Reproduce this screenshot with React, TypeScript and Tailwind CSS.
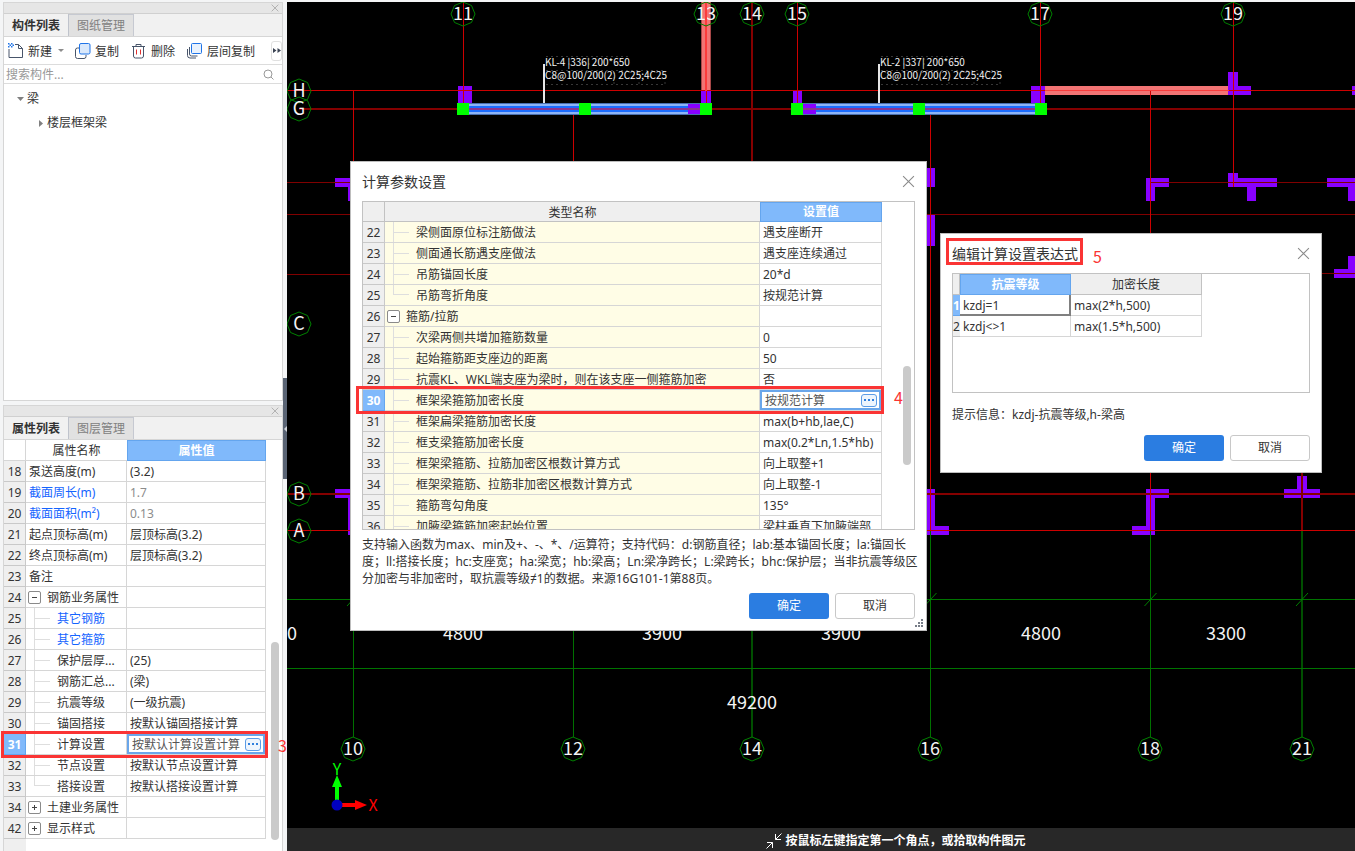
import type { ReactNode } from "react";

type Node = "plain" | "group-open" | "group-closed" | "child" | "last";

interface Row {
  no: number;
  name: string;
  value: string;
  node: Node;
  link?: boolean;
  muted?: boolean;
  selected?: boolean;
}

const propertyRows: Row[] = [
  { no: 18, name: "泵送高度(m)", value: "(3.2)", node: "plain" },
  { no: 19, name: "截面周长(m)", value: "1.7", node: "plain", link: true, muted: true },
  { no: 20, name: "截面面积(m²)", value: "0.13", node: "plain", link: true, muted: true },
  { no: 21, name: "起点顶标高(m)", value: "层顶标高(3.2)", node: "plain" },
  { no: 22, name: "终点顶标高(m)", value: "层顶标高(3.2)", node: "plain" },
  { no: 23, name: "备注", value: "", node: "plain" },
  { no: 24, name: "钢筋业务属性", value: "", node: "group-open" },
  { no: 25, name: "其它钢筋", value: "", node: "child", link: true },
  { no: 26, name: "其它箍筋", value: "", node: "child", link: true },
  { no: 27, name: "保护层厚...", value: "(25)", node: "child" },
  { no: 28, name: "钢筋汇总...", value: "(梁)", node: "child" },
  { no: 29, name: "抗震等级", value: "(一级抗震)", node: "child" },
  { no: 30, name: "锚固搭接", value: "按默认锚固搭接计算", node: "child" },
  { no: 31, name: "计算设置", value: "按默认计算设置计算", node: "child", selected: true },
  { no: 32, name: "节点设置", value: "按默认节点设置计算", node: "child" },
  { no: 33, name: "搭接设置", value: "按默认搭接设置计算", node: "last" },
  { no: 34, name: "土建业务属性", value: "", node: "group-closed" },
  { no: 42, name: "显示样式", value: "", node: "group-closed" },
];

const paramRows: Row[] = [
  { no: 22, name: "梁侧面原位标注筋做法", value: "遇支座断开", node: "child" },
  { no: 23, name: "侧面通长筋遇支座做法", value: "遇支座连续通过", node: "child" },
  { no: 24, name: "吊筋锚固长度", value: "20*d", node: "child" },
  { no: 25, name: "吊筋弯折角度", value: "按规范计算", node: "last" },
  { no: 26, name: "箍筋/拉筋", value: "", node: "group-open" },
  { no: 27, name: "次梁两侧共增加箍筋数量", value: "0", node: "child" },
  { no: 28, name: "起始箍筋距支座边的距离", value: "50", node: "child" },
  { no: 29, name: "抗震KL、WKL端支座为梁时，则在该支座一侧箍筋加密", value: "否", node: "child" },
  { no: 30, name: "框架梁箍筋加密长度", value: "按规范计算", node: "child", selected: true },
  { no: 31, name: "框架扁梁箍筋加密长度", value: "max(b+hb,lae,C)", node: "child" },
  { no: 32, name: "框支梁箍筋加密长度", value: "max(0.2*Ln,1.5*hb)", node: "child" },
  { no: 33, name: "框架梁箍筋、拉筋加密区根数计算方式", value: "向上取整+1", node: "child" },
  { no: 34, name: "框架梁箍筋、拉筋非加密区根数计算方式", value: "向上取整-1", node: "child" },
  { no: 35, name: "箍筋弯勾角度", value: "135°", node: "child" },
  { no: 36, name: "加腋梁箍筋加密起始位置", value: "梁柱垂直下加腋端部", node: "child" },
];

function TreeMark({ node }: { node: Node }) {
  if (node === "plain") return <span className="w-[3px] shrink-0" />;
  if (node === "child")
    return (
      <span className="ml-2 mr-[7px] flex h-full w-4 shrink-0 items-center border-l border-[#dedede]">
        <span className="h-px w-full bg-[#dedede]" />
      </span>
    );
  if (node === "last")
    return <span className="ml-2 mr-[7px] h-1/2 w-4 shrink-0 self-start border-b border-l border-[#dedede]" />;
  return (
    <button
      type="button"
      aria-label={node === "group-open" ? "折叠" : "展开"}
      className="ml-[2px] mr-[6px] flex h-[13px] w-[13px] shrink-0 items-center justify-center rounded-[2px] border border-[#8a8a8a] bg-white"
    >
      <svg viewBox="0 0 7 7" className="h-[7px] w-[7px]" stroke="#444" fill="none">
        <path d="M1 3.5h5" />
        {node === "group-closed" && <path d="M3.5 1v5" />}
      </svg>
    </button>
  );
}

function MoreButton() {
  return (
    <button
      type="button"
      aria-label="更多"
      className="mr-[2px] flex h-[13px] w-4 shrink-0 items-center justify-center rounded-[3px] border border-[#5c9ce6] bg-[#eef5fd]"
    >
      <svg viewBox="0 0 10 2" className="h-[2px] w-[10px]" fill="#2f7fdd">
        <rect width="2" height="2" />
        <rect x="4" width="2" height="2" />
        <rect x="8" width="2" height="2" />
      </svg>
    </button>
  );
}

function GridRows({ rows, nameClass }: { rows: Row[]; nameClass: string }) {
  return (
    <tbody>
      {rows.map((r) => (
        <tr key={r.no} className="h-[21px]">
          <th
            scope="row"
            className={
              r.selected
                ? "border-b border-r border-[#64a5ee] bg-[#80b9fb] p-0 pt-[2px] text-center font-bold text-white"
                : "border-b border-r border-[#c9c9c9] bg-[#efefef] p-0 pt-[2px] text-center font-normal"
            }
          >
            {r.no}
          </th>
          <td className={`border-b border-r border-[#d6d6d6] p-0 ${nameClass}`}>
            <div className={`flex h-5 items-center whitespace-nowrap ${r.link ? "text-[#1464ff]" : ""}`}>
              <TreeMark node={r.node} />
              <span className="pt-[2px]">{r.name}</span>
            </div>
          </td>
          <td className={`border-b border-r border-[#d6d6d6] bg-white p-0 ${r.muted ? "text-[#8c8c8c]" : ""}`}>
            {r.selected ? (
              <div className="flex h-5 items-center border-2 border-[#6aa6ea]">
                <input
                  aria-label={r.name}
                  defaultValue={r.value}
                  className="h-4 w-0 min-w-0 flex-1 bg-transparent pl-[3px] pt-px leading-4 text-[#555] outline-none"
                />
                <MoreButton />
              </div>
            ) : (
              <div className="flex h-5 items-center whitespace-nowrap pl-[3px] pt-[2px]">{r.value}</div>
            )}
          </td>
        </tr>
      ))}
    </tbody>
  );
}

function Cross({ className }: { className: string }) {
  return (
    <svg viewBox="0 0 12 12" className={className} stroke="currentColor" fill="none">
      <path d="M1 1l10 10M11 1L1 11" />
    </svg>
  );
}

function PanelHead({ tabs }: { tabs: [string, string] }) {
  return (
    <>
      <div className="flex h-[11px] shrink-0 items-center justify-end border-b border-[#d0d0d0] bg-[#e6e6e6] pr-[3px]">
        <button type="button" aria-label="关闭面板" className="text-[#999]">
          <Cross className="h-2 w-2" />
        </button>
      </div>
      <div className="flex h-[23px] shrink-0 border-b border-[#d6d6d6] bg-[#f1f1f1]" role="tablist">
        <button
          type="button"
          role="tab"
          aria-selected="true"
          className="w-[65px] border-r border-[#bfc3cc] pt-[2px] font-bold"
        >
          {tabs[0]}
        </button>
        <button
          type="button"
          role="tab"
          aria-selected="false"
          className="w-[65px] border-r border-t border-[#c6c9d1] bg-[#e1e1e1] pt-px text-[#808080]"
        >
          {tabs[1]}
        </button>
      </div>
    </>
  );
}

function ToolButton({ icon, label, className }: { icon: ReactNode; label: string; className: string }) {
  return (
    <button type="button" className={`flex shrink-0 items-center gap-1 whitespace-nowrap ${className}`}>
      {icon}
      <span className="pt-[2px]">{label}</span>
    </button>
  );
}

function Toolbar() {
  return (
    <div className="flex h-7 shrink-0 items-center border-b border-[#dcdcdc] bg-white pl-1">
      <ToolButton
        className=""
        label="新建"
        icon={
          <svg viewBox="0 0 16 16" className="h-4 w-4" fill="none">
            <path d="M1 6v8.5h13.500V5.500L10.500 1.500H7M10.500 1.500v4h4" stroke="#48556a" strokeLinejoin="round" />
            <path
              d="M0 0h1.500v1.500H0zM3 0h1.500v1.500H3zM1.500 1.500H3V3H1.500zM4.500 1.500H6V3H4.500zM0 3h1.500v1.500H0zM3 3h1.500v1.500H3z"
              fill="#1f74e8"
            />
          </svg>
        }
      />
      <svg viewBox="0 0 6 3" className="ml-[6px] h-[3px] w-[6px] shrink-0" fill="#8c8c8c">
        <path d="M0 0h6L3 3z" />
      </svg>
      <ToolButton
        className="ml-[11px]"
        label="复制"
        icon={
          <svg viewBox="0 0 16 16" className="h-4 w-4" fill="none">
            <path d="M4 5H2.500a2 2 0 0 0-2 2v6.500a2 2 0 0 0 2 2H9a2 2 0 0 0 2-2V12" stroke="#48556a" />
            <rect x="4.500" y=".5" width="10.500" height="10.500" rx="1.500" fill="#d9e8fb" stroke="#1f74e8" />
          </svg>
        }
      />
      <ToolButton
        className="ml-3"
        label="删除"
        icon={
          <svg viewBox="0 0 16 16" className="h-4 w-4" fill="none">
            <path d="M1 3.500h13M5 3.500v-2h5v2M2.500 3.500v9.500a2 2 0 0 0 2 2h6a2 2 0 0 0 2-2V3.500" stroke="#48556a" />
            <path d="M5.500 6.500v5M9.500 6.500v5" stroke="#e03030" />
          </svg>
        }
      />
      <ToolButton
        className="ml-3"
        label="层间复制"
        icon={
          <svg viewBox="0 0 16 16" className="h-4 w-4" fill="none">
            <path d="M.5 6v6.500a2.500 2.500 0 0 0 2.500 2.500h6M2.500 4v7a2 2 0 0 0 2 2h6" stroke="#48556a" />
            <rect x="4.500" y=".5" width="10" height="10" rx="1" fill="#e9f2fd" stroke="#1f74e8" />
          </svg>
        }
      />
      <button
        type="button"
        aria-label="更多工具"
        className="ml-auto flex h-5 w-[11px] shrink-0 items-center justify-center rounded-[3px] border border-[#e0e0e0]"
      >
        <svg viewBox="0 0 8 5" className="h-[5px] w-2 shrink-0" fill="#3c4454">
          <path d="M0 0l3.500 2.500L0 5zM4.500 0L8 2.500 4.500 5z" />
        </svg>
      </button>
    </div>
  );
}

function ComponentPanel() {
  return (
    <section className="flex flex-col border border-[#d6d6d6] bg-white">
      <PanelHead tabs={["构件列表", "图纸管理"]} />
      <Toolbar />
      <label className="flex h-[19px] shrink-0 items-center border-b border-[#dcdcdc] pl-[2px] pr-2">
        <input
          aria-label="搜索构件"
          placeholder="搜索构件..."
          className="min-w-0 flex-1 bg-transparent pt-[2px] leading-4 outline-none placeholder:text-[#999]"
        />
        <svg viewBox="0 0 11 11" className="h-[11px] w-[11px]" fill="none" stroke="#999">
          <circle cx="5" cy="5" r="4" />
          <path d="M8 8l2.500 2.500" />
        </svg>
      </label>
      <ul className="h-[316px] pt-[3px] leading-6">
        <li>
          <span className="flex items-center gap-[3px] pl-[13px]">
            <svg viewBox="0 0 7 4" className="h-1 w-[7px]" fill="#808080">
              <path d="M0 0h7L3.500 4z" />
            </svg>
            梁
          </span>
          <ul>
            <li className="flex items-center gap-1 pl-[35px]">
              <svg viewBox="0 0 4 7" className="h-[7px] w-1" fill="#808080">
                <path d="M0 0l4 3.500L0 7z" />
              </svg>
              楼层框架梁
            </li>
          </ul>
        </li>
      </ul>
    </section>
  );
}

function PropertyPanel() {
  return (
    <section className="flex min-h-0 flex-1 flex-col border border-b-0 border-[#d6d6d6] bg-white">
      <PanelHead tabs={["属性列表", "图层管理"]} />
      <div className="relative flex min-h-0 flex-1">
        <div className="flex w-[262px] flex-col">
          <table className="w-full table-fixed border-separate border-spacing-0">
            <colgroup>
              <col className="w-[22px]" />
              <col className="w-[101px]" />
              <col />
            </colgroup>
            <thead>
              <tr className="h-[21px]">
                <th aria-label="序号" className="border-b border-r border-[#d6d6d6] p-0" />
                <th className="border-b border-[#d6d6d6] p-0 pt-px font-normal">属性名称</th>
                <th className="border border-[#64a5ee] bg-[#80b9fb] p-0 font-bold leading-[18px] text-white">属性值</th>
              </tr>
            </thead>
            <GridRows rows={propertyRows} nameClass="bg-white" />
          </table>
          <div className="w-[22px] flex-1 bg-[#efefef]" />
        </div>
        <div className="absolute right-[3px] top-[202px] h-[198px] w-2 rounded-full bg-[#cacaca]" />
      </div>
    </section>
  );
}

const V = "#8800ff";

const columns: number[][] = [
  [458, 86, 14, 28], [701, 91, 10, 14], [793, 91, 9, 14], [1031, 86, 14, 28],
  [1228, 72, 10, 23], [1238, 86, 13, 9], [1352, 86, 10, 9],
  [1146, 178, 9, 23], [1155, 178, 14, 9],
  [1228, 173, 10, 14], [1238, 178, 39, 9], [1247, 187, 9, 14],
  [1327, 178, 30, 9], [1348, 187, 9, 14],
  [926, 168, 9, 19], [926, 215, 9, 31],
  [1334, 269, 23, 9], [1348, 256, 9, 13],
  [926, 489, 9, 46], [935, 526, 14, 9],
  [1146, 489, 9, 46], [1155, 489, 14, 9], [1132, 526, 14, 9],
  [1284, 489, 36, 9], [1297, 476, 10, 13],
  [335, 178, 20, 9], [348, 187, 9, 14], [335, 489, 20, 9], [348, 498, 9, 37],
];

const redLines: number[][] = [
  [287, 90.5, 1400, 90.5], [287, 530.5, 1400, 530.5],
  [463.5, 2, 463.5, 109], [353.5, 90, 353.5, 531], [573.5, 109, 573.5, 531],
  [706.5, 2, 706.5, 109], [797.5, 2, 797.5, 109], [930.5, 109, 930.5, 531],
  [1040.5, 2, 1040.5, 109], [1233.5, 2, 1233.5, 187], [1150.5, 90, 1150.5, 531],
];

const darkLines: number[][] = [
  [287, 182.5, 353, 182.5], [1150, 182.5, 1400, 182.5], [287, 214.5, 1400, 214.5],
  [287, 274.5, 353, 274.5], [1300, 273.5, 1400, 273.5],
];

const thickLines: number[][] = [
  [299, 109, 1400, 109], [287, 494, 1400, 494], [752, 2, 752, 531], [1302, 473, 1302, 531],
];

type Bubble = [string, number, number];

const numberedTop: Bubble[] = [
  ["11", 463, 14], ["13", 706, 14], ["15", 797, 14], ["17", 1040, 14], ["19", 1233, 14],
];

const otherBubbles: Bubble[] = [
  ["14", 752, 14],
  ["H", 299, 91], ["G", 299, 109], ["C", 299, 324], ["B", 299, 494], ["A", 299, 531],
  ["10", 353, 749], ["12", 573, 749], ["14", 752, 749], ["16", 930, 749], ["18", 1150, 749], ["21", 1302, 749],
];

const dims: [string, number, number][] = [
  ["0", 292, 640], ["4800", 463, 640], ["3900", 662, 640], ["3900", 841, 640],
  ["4800", 1041, 640], ["3300", 1226, 640], ["49200", 752, 709],
];

function BubbleTexts({ data }: { data: Bubble[] }) {
  return (
    <g fill="#f4f4f4" fontSize="18" textAnchor="middle">
      {data.map(([t, x, y]) => (
        <text key={`${t}-${x}-${y}`} x={x} y={y + 6}>
          {t}
        </text>
      ))}
    </g>
  );
}

function Lines({ data, stroke, width }: { data: number[][]; stroke: string; width: number }) {
  return (
    <g stroke={stroke} strokeWidth={width}>
      {data.map(([x1, y1, x2, y2], i) => (
        <line key={i} x1={x1} y1={y1} x2={x2} y2={y2} />
      ))}
    </g>
  );
}

function Beam({ x, width, stub }: { x: number; width: number; stub: number }) {
  return (
    <g>
      <rect x={x} y="103" width={width} height="12" fill="#4a6fae" />
      <rect x={x} y="104" width={width} height="10" fill="#8db4f6" />
      <rect x={x} y="106" width={width} height="6" fill="#1a6cff" />
      <rect x={stub} y="104" width="13" height="10" fill={V} />
      <rect x={x} y="108" width={width} height="2" fill="#8a3590" />
    </g>
  );
}

function Tag({ x, head, body }: { x: number; head: string; body: string }) {
  return (
    <g>
      <rect x={x - 1} y="64" width="2" height="39" fill="#e6e6e6" />
      <g stroke="#8a8a8a" strokeDasharray="2 3" opacity="0.4" fill="none">
        <path d={`M${x + 2} 56.500h84M${x + 2} 70.500h118M${x + 2} 84.500h118`} />
        <path d={`M${x + 25} 58v10M${x + 45} 58v10M${x + 70} 72v12M${x + 95} 72v12M${x + 121} 72v12`} />
      </g>
      <g fill="#f2f2f2" fontSize="10">
        <text x={x + 1} y="66">{head}</text>
        <text x={x + 1} y="79">{body}</text>
      </g>
    </g>
  );
}

function Drawing() {
  return (
    <svg className="h-full w-full font-['Noto_Sans_CJK_SC',sans-serif]" role="img" aria-label="结构平面图">
      <g transform="translate(-287 -2)">
        <g shapeRendering="crispEdges">
          <rect x="701" y="2" width="10" height="89" fill="#a84848" />
          <rect x="702" y="2" width="8" height="89" fill="#f27474" />
          <rect x="1045" y="86" width="184" height="9" fill="#f27474" />
          {columns.map(([x, y, w, h], i) => (
            <rect key={i} x={x} y={y} width={w} height={h} fill={V} />
          ))}
        </g>
        <BubbleTexts data={numberedTop} />
        <g shapeRendering="crispEdges">
          <Lines data={thickLines} stroke="#850000" width={2} />
          <Lines data={darkLines} stroke="#800000" width={1} />
          <Lines data={redLines} stroke="#cc0000" width={1} />
          <Lines
            data={[[706, 2, 706, 91]]}
            stroke="#fb3c3c"
            width={2}
          />
          <Lines data={[[1045, 90.5, 1229, 90.5]]} stroke="#fb3c3c" width={1} />
          <Lines
            data={[353.5, 573.5, 930.5, 1150.5].map((x) => [x, 531, x, 737])}
            stroke="#007000"
            width={1}
          />
          <Lines data={[[752, 531, 752, 737], [1302, 531, 1302, 737]]} stroke="#004f00" width={2} />
          <Lines data={[[287, 599.5, 1400, 599.5], [287, 668.5, 1400, 668.5]]} stroke="#007400" width={1} />
        </g>
        <Lines
          data={[353, 930.5, 1150.5, 1302].map((x) => [x - 6, 606, x + 6, 593])}
          stroke="#008000"
          width={1}
        />
        <g fill="none" stroke="#008200">
          {[...numberedTop, ...otherBubbles].map(([t, x, y]) => (
            <polygon
              key={`${t}-${x}-${y}`}
              points={Array.from({ length: 8 }, (_, i) => {
                const a = (i * Math.PI) / 4;
                return `${x + 12 * Math.sin(a)},${y - 12 * Math.cos(a)}`;
              }).join(" ")}
            />
          ))}
        </g>
        <BubbleTexts data={otherBubbles} />
        <Beam x={463} width={243} stub={688} />
        <Beam x={797} width={244} stub={803} />
        {[463, 585, 706, 797, 919, 1041].map((x) => (
          <rect key={x} x={x - 6} y="103" width="12" height="12" fill="#00ff00" />
        ))}
        <Tag x={544} head="KL-4 |336| 200*650" body="C8@100/200(2) 2C25;4C25" />
        <Tag x={879} head="KL-2 |337| 200*650" body="C8@100/200(2) 2C25;4C25" />
        <g fill="#f4f4f4" fontSize="18" textAnchor="middle">
          {dims.map(([t, x, y]) => (
            <text key={`${t}-${x}`} x={x} y={y}>
              {t}
            </text>
          ))}
        </g>
        <rect x="335" y="786" width="4" height="16" fill="#00ff00" />
        <path d="M337 775l5 12h-10z" fill="#00ff00" />
        <rect x="341" y="803" width="15" height="4" fill="#ff0000" />
        <path d="M367 805l-12 -5v10z" fill="#ff0000" />
        <circle cx="337" cy="805" r="5.500" fill="#0000c0" />
        <g fontSize="16" textAnchor="middle">
          <text x="337" y="775" fill="#00ff00">Y</text>
          <text x="373" y="811" fill="#ff0000">X</text>
        </g>
      </g>
    </svg>
  );
}

function DialogButtons() {
  return (
    <div className="flex justify-end gap-[6px]">
      <button type="button" className="h-[26px] w-20 rounded-[3px] bg-[#2b7de1] text-white">
        确定
      </button>
      <button type="button" className="h-[26px] w-20 rounded-[3px] border border-[#c8c8c8] bg-white">
        取消
      </button>
    </div>
  );
}

function DialogTitle({ text }: { text: string }) {
  return (
    <header className="flex h-[39px] shrink-0 items-center justify-between">
      <h2 className="text-sm">{text}</h2>
      <button type="button" aria-label="关闭" className="text-[#8a8a8a]">
        <Cross className="h-[13px] w-[13px]" />
      </button>
    </header>
  );
}

function ParamDialog() {
  return (
    <section
      role="dialog"
      aria-label="计算参数设置"
      className="absolute left-[350px] top-[161px] w-[577px] border border-[#bdbdbd] bg-white px-[11px] pb-[11px]"
    >
      <DialogTitle text="计算参数设置" />
      <div className="relative h-[329px] overflow-hidden border border-[#c2c2c2] pr-8">
        <table className="w-full table-fixed border-separate border-spacing-0">
          <colgroup>
            <col className="w-[22px]" />
            <col />
            <col className="w-[122px]" />
          </colgroup>
          <thead>
            <tr className="h-5">
              <th aria-label="序号" className="border-b border-r border-[#c2c2c2] bg-[#efefef] p-0" />
              <th className="border-b border-[#c2c2c2] bg-[#efefef] p-0 pt-[2px] font-normal">类型名称</th>
              <th className="border border-[#64a5ee] bg-[#80b9fb] p-0 font-bold leading-[18px] text-white">设置值</th>
            </tr>
          </thead>
          <GridRows rows={paramRows} nameClass="bg-[#fffde6]" />
        </table>
        <div className="absolute right-[3px] top-[164px] h-[99px] w-2 rounded-full bg-[#cacaca]" />
      </div>
      <p className="mb-[6px] mt-[6px] whitespace-nowrap leading-[17px]">
        支持输入函数为max、min及+、-、*、/运算符；支持代码：d:钢筋直径；lab:基本锚固长度；la:锚固长
        <br />
        度；ll:搭接长度；hc:支座宽；ha:梁宽；hb:梁高；Ln:梁净跨长；L:梁跨长；bhc:保护层；当非抗震等级区
        <br />
        分加密与非加密时，取抗震等级≠1的数据。来源16G101-1第88页。
      </p>
      <DialogButtons />
      <svg viewBox="0 0 8 8" className="absolute bottom-[3px] right-[3px] h-2 w-2" fill="#777d88">
        <path d="M6 0h2v2H6zM3 3h2v2H3zM6 3h2v2H6zM0 6h2v2H0zM3 6h2v2H3zM6 6h2v2H6z" />
      </svg>
    </section>
  );
}

function ExpressionDialog() {
  const rows: [string, string][] = [
    ["kzdj=1", "max(2*h,500)"],
    ["kzdj<>1", "max(1.5*h,500)"],
  ];
  return (
    <section
      role="dialog"
      aria-label="编辑计算设置表达式"
      className="absolute left-[940px] top-[233px] w-[382px] border border-[#bdbdbd] bg-white px-[11px] pb-[11px]"
    >
      <DialogTitle text="编辑计算设置表达式" />
      <div className="h-[120px] border border-[#c2c2c2]">
        <table className="w-[249px] table-fixed border-separate border-spacing-0">
          <colgroup>
            <col className="w-[7px]" />
            <col className="w-[111px]" />
            <col />
          </colgroup>
          <thead>
            <tr className="h-[21px]">
              <th aria-label="序号" className="border-b border-r border-[#c2c2c2] bg-[#efefef] p-0" />
              <th className="border border-[#64a5ee] bg-[#80b9fb] p-0 font-bold leading-[18px] text-white">抗震等级</th>
              <th className="border-b border-r border-[#c2c2c2] bg-[#efefef] p-0 pt-[2px] font-normal">加密长度</th>
            </tr>
          </thead>
          <tbody>
            {rows.map(([level, length], i) => (
              <tr key={level} className="h-[21px]">
                <th
                  scope="row"
                  className={
                    i === 0
                      ? "overflow-hidden border-b border-[#64a5ee] bg-[#80b9fb] p-0 pt-[2px] text-left font-bold text-white"
                      : "overflow-hidden border-b border-[#c2c2c2] bg-[#efefef] p-0 pt-[2px] text-left font-normal"
                  }
                >
                  {i + 1}
                </th>
                <td
                  className={
                    i === 0
                      ? "border-b-2 border-r-2 border-[#808080] p-0 pl-[3px] pt-[2px]"
                      : "border-b border-r border-[#d6d6d6] p-0 pl-[3px] pt-[2px]"
                  }
                >
                  {level}
                </td>
                <td className="border-b border-r border-[#d6d6d6] p-0 pl-[3px] pt-[2px]">{length}</td>
              </tr>
            ))}
          </tbody>
        </table>
      </div>
      <p className="mb-[11px] mt-[13px] leading-[18px]">提示信息：kzdj-抗震等级,h-梁高</p>
      <DialogButtons />
    </section>
  );
}

function StatusBar() {
  return (
    <footer className="flex h-[23px] shrink-0 items-center justify-center gap-[3px] bg-[#282828] pl-[150px] pt-[3px] font-bold text-white">
      <svg viewBox="0 0 16 16" className="h-4 w-4" fill="none" stroke="#fff">
        <path d="M15.500 .5l-6 6M9.500 1v5.500H15M.5 15.500l6-6M1 9.500h5.500V15" />
      </svg>
      按鼠标左键指定第一个角点，或拾取构件图元
    </footer>
  );
}

export default function App() {
  return (
    <div className="relative flex h-screen overflow-hidden bg-[#f4f5f6] pt-[2px] font-['Noto_Sans','Noto_Sans_CJK_SC',sans-serif] text-xs text-[#333]">
      <aside className="flex w-[283px] shrink-0 flex-col gap-1 pl-[3px]">
        <ComponentPanel />
        <PropertyPanel />
      </aside>
      <div className="flex w-1 shrink-0 items-center pt-1">
        <button type="button" aria-label="收起面板" className="flex h-[101px] w-1 items-center bg-[#5a6474]">
          <svg viewBox="0 0 4 6" className="h-[6px] w-1" fill="#cfd3da">
            <path d="M4 0v6L1 3z" />
          </svg>
        </button>
      </div>
      <main className="flex min-w-0 flex-1 flex-col bg-black">
        <div className="min-h-0 flex-1">
          <Drawing />
        </div>
        <StatusBar />
      </main>

      <ParamDialog />
      <ExpressionDialog />

      <div className="pointer-events-none absolute left-[1px] top-[731px] h-[27px] w-[267px] border-[3px] border-[#fa3434]" />
      <div className="pointer-events-none absolute left-[356px] top-[386px] h-7 w-[528px] border-[3px] border-[#fa3434]" />
      <div className="pointer-events-none absolute left-[946px] top-[238px] h-[27px] w-[137px] border-[3px] border-[#fa3434]" />
      <span className="absolute left-[278px] top-[735px] font-['Noto_Sans_CJK_SC',sans-serif] text-base leading-5 text-[#fa3434]">3</span>
      <span className="absolute left-[894px] top-[387px] font-['Noto_Sans_CJK_SC',sans-serif] text-base leading-5 text-[#fa3434]">4</span>
      <span className="absolute left-[1093px] top-[246px] font-['Noto_Sans_CJK_SC',sans-serif] text-base leading-5 text-[#fa3434]">5</span>
    </div>
  );
}
